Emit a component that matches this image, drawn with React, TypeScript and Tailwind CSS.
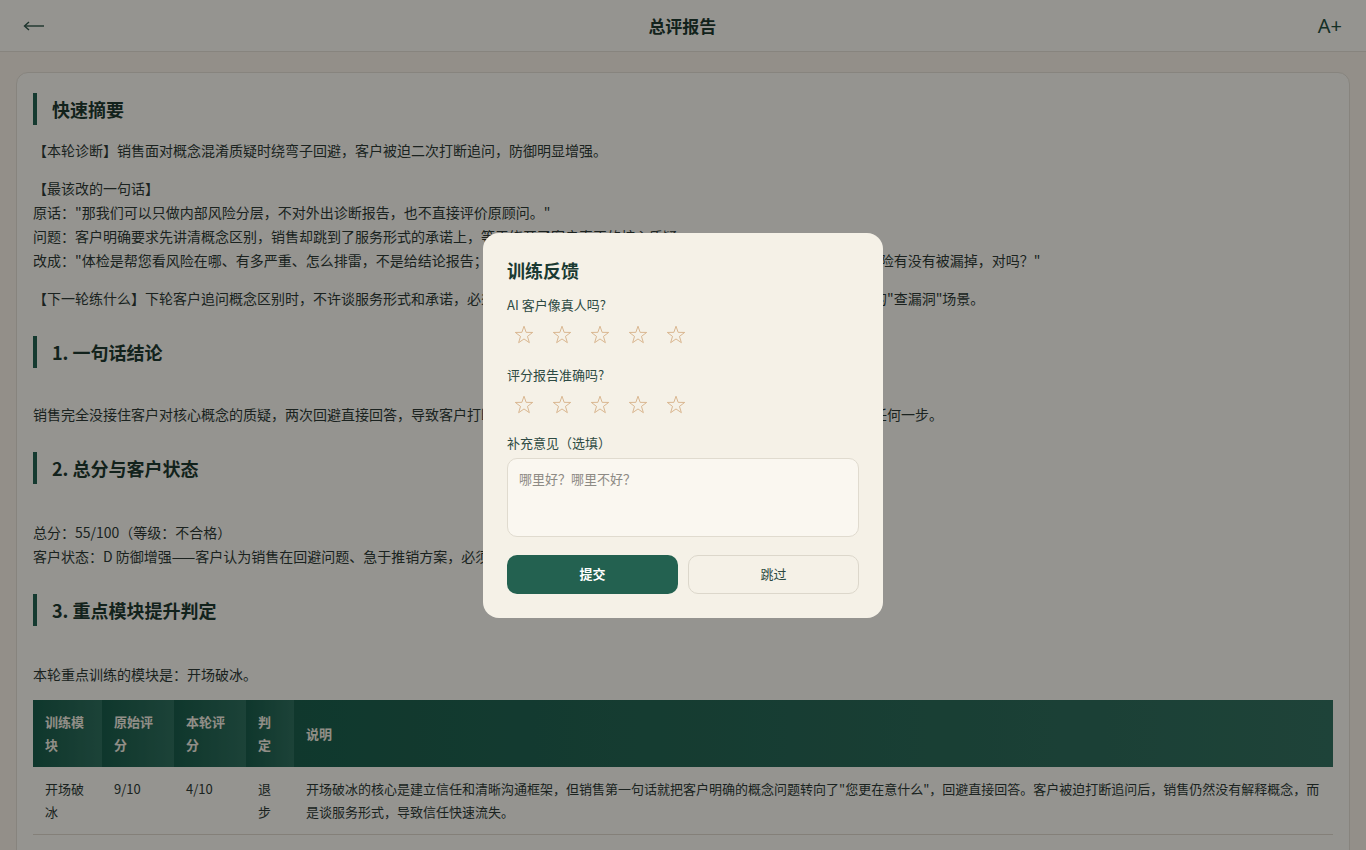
import React from "react";

const FONT = "font-['Noto_Sans_CJK_SC','Noto_Sans',sans-serif]";

function Heading({ children, className = "" }: { children: React.ReactNode; className?: string }) {
  return (
    <div className={`flex h-8 items-center border-l-4 border-[#236150] pl-[15px] text-[18px] font-bold text-[#1f3a30] ${className}`}>
      {children}
    </div>
  );
}

function Star() {
  return (
    <button className="flex h-[34px] w-[34px] items-center justify-center">
      <svg width="20" height="19" viewBox="0 0 24 23" fill="none">
        <polygon
          points="12,1.5 14.6,8.9 22.5,9 16.2,13.8 18.5,21.4 12,16.9 5.5,21.4 7.8,13.8 1.5,9 9.4,8.9"
          stroke="#d6b188"
          strokeWidth="1.1"
          strokeLinejoin="miter"
          fill="none"
        />
      </svg>
    </button>
  );
}

export default function App() {
  return (
    <div className={`relative h-[850px] w-full overflow-hidden bg-[#f5efe5] ${FONT}`}>
      {/* Header */}
      <header className="flex h-[52px] items-center justify-between border-b border-[#e2ddd2] bg-[#f8f7f1] px-6">
        <svg width="22" height="12" viewBox="0 0 22 12" className="-ml-[1px]">
          <path d="M2 6 H21" stroke="#2f5548" strokeWidth="1.4" />
          <path d="M6 2 L1.5 6 L6 10" stroke="#2f5548" strokeWidth="1.4" fill="none" />
        </svg>
        <div className="pl-[2px] text-[17px] font-bold text-[#1f3a30]">总评报告</div>
        <div className="font-['Noto_Sans',sans-serif] text-[20px] leading-none text-[#24503f]">A+</div>
      </header>

      {/* Main */}
      <main className="px-4 pt-5">
        <div className="rounded-xl border border-[#e2ddd2] bg-[#f8f7f1] px-4 pt-5 pb-10 text-[14px] leading-6 text-[#2e3a35]">
          <Heading>快速摘要</Heading>
          <div className="mt-[13px] space-y-[14px]">
            <p>【本轮诊断】销售面对概念混淆质疑时绕弯子回避，客户被迫二次打断追问，防御明显增强。</p>
            <p>
              【最该改的一句话】
              <br />
              原话："那我们可以只做内部风险分层，不对外出诊断报告，也不直接评价原顾问。"
              <br />
              问题：客户明确要求先讲清概念区别，销售却跳到了服务形式的承诺上，等于绕开了客户真正的核心质疑。
              <br />
              改成："体检是帮您看风险在哪、有多严重、怎么排雷，不是给结论报告；您真正想确认的，其实是原顾问之前做过的体检里，那些关键风险有没有被漏掉，对吗？"
            </p>
            <p>
              【下一轮练什么】下轮客户追问概念区别时，不许谈服务形式和承诺，必须先用一句话讲清体检和诊断的区别，再举一个客户身边最真实的"查漏洞"场景。
            </p>
          </div>

          <Heading className="mt-[26px]">1. 一句话结论</Heading>
          <p className="mt-[34px]">
            销售完全没接住客户对核心概念的质疑，两次回避直接回答，导致客户打断追问后防御明显升级，信任快速流失，整场对话没有往前推进任何一步。
          </p>

          <Heading className="mt-[26px]">2. 总分与客户状态</Heading>
          <p className="mt-[36px]">
            总分：55/100（等级：不合格）
            <br />
            客户状态：D 防御增强——客户认为销售在回避问题、急于推销方案，必须先把概念讲清楚才愿意继续沟通。
          </p>

          <Heading className="mt-[26px]">3. 重点模块提升判定</Heading>
          <p className="mt-[36px]">本轮重点训练的模块是：开场破冰。</p>

          <table className="mt-[14px] w-full table-fixed border-collapse text-[13px] leading-[23.4px]">
            <colgroup>
              <col className="w-[69px]" />
              <col className="w-[72px]" />
              <col className="w-[72px]" />
              <col className="w-[48px]" />
              <col />
            </colgroup>
            <thead>
              <tr className="text-left font-bold text-[#f2ede2]">
                <th className="bg-gradient-to-r from-[#195c4a] to-[#2f6f5e] px-3 py-[10px] align-middle">训练模块</th>
                <th className="bg-gradient-to-r from-[#195c4a] to-[#2f6f5e] px-3 py-[10px] align-middle">原始评分</th>
                <th className="bg-gradient-to-r from-[#195c4a] to-[#2f6f5e] px-3 py-[10px] align-middle">本轮评分</th>
                <th className="bg-gradient-to-r from-[#195c4a] to-[#2f6f5e] px-3 py-[10px] align-middle">判定</th>
                <th className="bg-gradient-to-r from-[#1b5e4c] to-[#33705f] px-3 py-[10px] align-middle">说明</th>
              </tr>
            </thead>
            <tbody>
              <tr className="border-b border-[#dcd6ca] align-top">
                <td className="px-3 py-[10px]">开场破冰</td>
                <td className="px-3 py-[10px]">9/10</td>
                <td className="px-3 py-[10px]">4/10</td>
                <td className="px-3 py-[10px]">退步</td>
                <td className="px-3 py-[10px]">
                  开场破冰的核心是建立信任和清晰沟通框架，但销售第一句话就把客户明确的概念问题转向了"您更在意什么"，回避直接回答。客户被迫打断追问后，销售仍然没有解释概念，而是谈服务形式，导致信任快速流失。
                </td>
              </tr>
            </tbody>
          </table>
        </div>
      </main>

      {/* Overlay + Modal */}
      <div className="fixed inset-0 flex items-center justify-center bg-black/40">
        <div className="w-[400px] rounded-2xl bg-[#f5f1e7] p-6">
          <div className="text-[18px] font-bold leading-[26px] text-[#1a3a32]">训练反馈</div>
          <div className="mt-3 text-[13px] leading-5 text-[#2d4a43]">AI 客户像真人吗?</div>
          <div className="mt-[3px] flex gap-1">
            <Star />
            <Star />
            <Star />
            <Star />
            <Star />
          </div>
          <div className="mt-[13px] text-[13px] leading-5 text-[#2d4a43]">评分报告准确吗?</div>
          <div className="mt-[3px] flex gap-1">
            <Star />
            <Star />
            <Star />
            <Star />
            <Star />
          </div>
          <div className="mt-[11px] text-[13px] leading-5 text-[#2d4a43]">补充意见（选填）</div>
          <textarea
            className="mt-[5px] block h-[79px] w-full resize-none rounded-[10px] border border-[#e0dbcf] bg-[#faf7f0] px-[11px] py-[10px] text-[13px] leading-5 text-[#2d4a43] outline-none placeholder:text-[#8d8a84]"
            placeholder="哪里好？哪里不好？"
          />
          <div className="mt-[18px] grid grid-cols-2 gap-[10px]">
            <button className="h-[39px] rounded-[10px] bg-[#236150] text-[13px] font-bold text-white">提交</button>
            <button className="h-[39px] rounded-[10px] border border-[#dcd7cb] bg-[#f5f1e7] text-[13px] text-[#2d4a43]">跳过</button>
          </div>
        </div>
      </div>
    </div>
  );
}
